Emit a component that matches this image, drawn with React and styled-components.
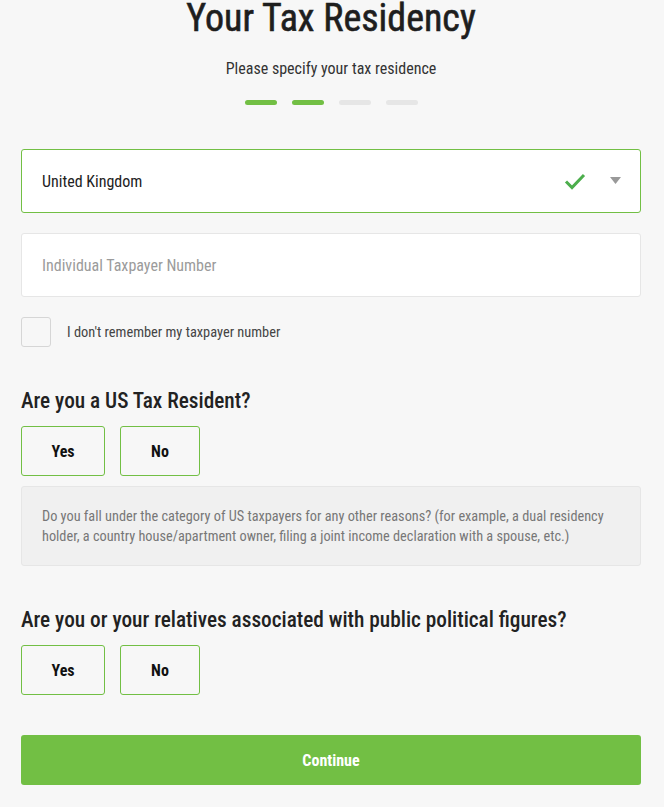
import React, { useState } from 'react';
import styled, { createGlobalStyle } from 'styled-components';

const GlobalStyle = createGlobalStyle`
  body {
    margin: 0;
    background: #f7f7f7;
    font-family: "Roboto Condensed", "Noto Sans Display", "DejaVu Sans Condensed", sans-serif;
    color: #222;
  }
`;

const Page = styled.div`
  padding: 0 23px 22px 21px;
  display: flex;
  flex-direction: column;
`;

const Title = styled.h1`
  margin: -4px 0 0;
  text-align: center;
  font-size: 38px;
  font-weight: 400;
  line-height: 44px;
  color: #1e1e1e;
  -webkit-text-stroke: 0.6px #1e1e1e;
`;

const Subtitle = styled.p`
  margin: 19px 0 0;
  text-align: center;
  font-size: 16px;
  line-height: 20px;
  color: #333;
`;

const Steps = styled.div`
  display: flex;
  justify-content: center;
  gap: 15px;
  margin: 21px 0 0;
`;

const Step = styled.span`
  width: 32px;
  height: 5px;
  border-radius: 3px;
  background: ${p => (p.$done ? '#72bf44' : '#e6e6e6')};
`;

const Field = styled.div`
  display: flex;
  align-items: center;
  height: 64px;
  box-sizing: border-box;
  padding: 0 19px 0 20px;
  margin-top: ${p => p.$top}px;
  background: #fff;
  border: 1px solid ${p => (p.$valid ? '#72bf44' : '#e6e6e6')};
  border-radius: 3px;
  font-size: 16px;
`;

const FieldText = styled.span`
  flex: 1;
  color: ${p => (p.$placeholder ? '#9b9b9b' : '#222')};
`;

const Icons = styled.div`
  display: flex;
  align-items: center;
  gap: 24px;
`;

const CheckRow = styled.label`
  display: flex;
  align-items: center;
  gap: 16px;
  margin-top: 20px;
  font-size: 14.4px;
  color: #444;
`;

const Box = styled.span`
  width: 30px;
  height: 30px;
  box-sizing: border-box;
  border: 1px solid #d6d6d6;
  border-radius: 3px;
  background: #f7f7f7;
`;

const Question = styled.h2`
  margin: ${p => p.$top}px 0 0;
  font-size: 21.3px;
  font-weight: 500;
  line-height: 26px;
  color: #222;
`;

const Choices = styled.div`
  display: flex;
  gap: 15px;
  margin-top: 12px;
`;

const Choice = styled.button`
  width: ${p => p.$w}px;
  height: 50px;
  border: 1px solid #72bf44;
  border-radius: 3px;
  background: transparent;
  font-family: inherit;
  font-size: 16px;
  font-weight: 700;
  color: #111;
  cursor: pointer;
`;

const Note = styled.div`
  margin-top: 10px;
  padding: 19px 20px;
  background: #f0f0f0;
  border: 1px solid #e6e6e6;
  border-radius: 3px;
  font-size: 14.3px;
  line-height: 20px;
  color: #777;
`;

const Continue = styled.button`
  margin-top: 40px;
  height: 50px;
  border: none;
  border-radius: 3px;
  background: #72bf44;
  color: #fff;
  font-family: inherit;
  font-size: 16px;
  font-weight: 700;
  cursor: pointer;
`;

const Check = () => (
  <svg width="22" height="18" viewBox="0 0 22 18">
    <path d="M2 9.5l6 6L20 3" fill="none" stroke="#4cae4c" strokeWidth="3" />
  </svg>
);

const Caret = () => (
  <svg width="11" height="8" viewBox="0 0 11 8">
    <path d="M0 0h11L5.5 7z" fill="#999" />
  </svg>
);

export default function App() {
  const [us, setUs] = useState(null);
  const [pep, setPep] = useState(null);

  return (
    <Page>
      <GlobalStyle />
      <Title>Your Tax Residency</Title>
      <Subtitle>Please specify your tax residence</Subtitle>
      <Steps>
        {[true, true, false, false].map((d, i) => (
          <Step key={i} $done={d} />
        ))}
      </Steps>

      <Field $top={44} $valid>
        <FieldText>United Kingdom</FieldText>
        <Icons>
          <Check />
          <Caret />
        </Icons>
      </Field>
      <Field $top={20}>
        <FieldText $placeholder>Individual Taxpayer Number</FieldText>
      </Field>

      <CheckRow>
        <Box />
        I don't remember my taxpayer number
      </CheckRow>

      <Question $top={41}>Are you a US Tax Resident?</Question>
      <Choices>
        <Choice $w={84} onClick={() => setUs('yes')}>Yes</Choice>
        <Choice $w={80} onClick={() => setUs('no')}>No</Choice>
      </Choices>
      <Note>
        Do you fall under the category of US taxpayers for any other reasons? (for example, a dual residency
        holder, a country house/apartment owner, filing a joint income declaration with a spouse, etc.)
      </Note>

      <Question $top={41}>Are you or your relatives associated with public political figures?</Question>
      <Choices>
        <Choice $w={84} onClick={() => setPep('yes')}>Yes</Choice>
        <Choice $w={80} onClick={() => setPep('no')}>No</Choice>
      </Choices>

      <Continue>Continue</Continue>
    </Page>
  );
}
